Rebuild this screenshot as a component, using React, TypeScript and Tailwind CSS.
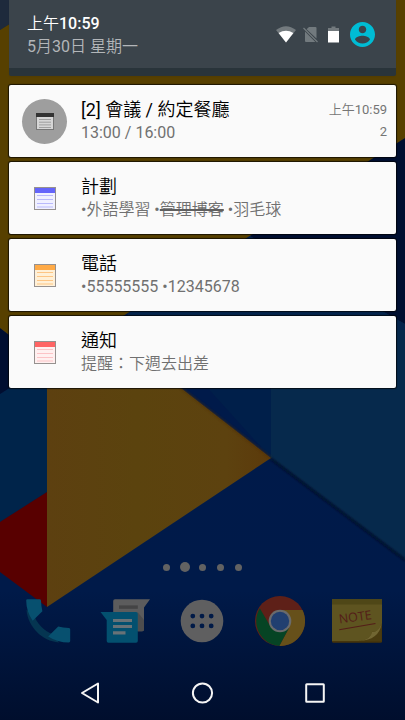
import type { ReactNode } from "react";
import clsx from "clsx";

type Notification = {
  title: string;
  body: ReactNode;
  icon: ReactNode;
  time?: string;
  count?: number;
};

type NoteColors = {
  bar: string;
  paper: string;
  line: string;
};

function NoteIcon({ bar, paper, line }: NoteColors) {
  return (
    <svg viewBox="0 0 22 23" className="h-[23px] w-[22px]" aria-hidden="true">
      <rect x="0.5" y="0.5" width="21" height="22" fill={paper} stroke="#96918f" />
      <rect x="1" y="1" width="20" height="5" fill={bar} />
      <path d="M3 8.5H19M3 12.5H19M3 16.5H19M3 20H19" stroke={line} strokeWidth="1.1" />
    </svg>
  );
}

function MeetingIcon() {
  return (
    <span className="flex size-[45px] items-center justify-center rounded-full bg-[#9e9e9e]">
      <svg viewBox="0 0 18 17" className="h-[17px] w-[18px]" aria-hidden="true">
        <rect x="0.5" y="0.5" width="17" height="16" fill="#d6d6d6" stroke="#777" />
        <rect width="18" height="4" fill="#333" />
        <path d="M3 6.5H15M3 9.2H15M3 11.9H15M3 14.5H15" stroke="#999" strokeWidth="0.9" />
      </svg>
    </span>
  );
}

const notifications: Notification[] = [
  {
    title: "[2] 會議 / 約定餐廳",
    body: "13:00 / 16:00",
    icon: <MeetingIcon />,
    time: "上午10:59",
    count: 2,
  },
  {
    title: "計劃",
    body: (
      <>
        •外語學習 •<s className="decoration-[#5f5f5f] decoration-2">管理博客</s> •羽毛球
      </>
    ),
    icon: <NoteIcon bar="#6464fa" paper="#f0f0ff" line="#b9b9fb" />,
  },
  {
    title: "電話",
    body: "•55555555 •12345678",
    icon: <NoteIcon bar="#ffaa46" paper="#fff0d7" line="#fdc584" />,
  },
  {
    title: "通知",
    body: "提醒：下週去出差",
    icon: <NoteIcon bar="#ff6464" paper="#fff0f0" line="#fcc3c6" />,
  },
];

function Wallpaper() {
  return (
    <svg
      viewBox="0 0 405 720"
      preserveAspectRatio="xMidYMid slice"
      className="absolute inset-0 h-full w-full"
      aria-hidden="true"
    >
      <defs>
        <linearGradient id="base" x1="0" y1="0" x2="0" y2="1">
          <stop offset="0" stopColor="#001a4c" />
          <stop offset="0.82" stopColor="#001a49" />
          <stop offset="1" stopColor="#000e2d" />
        </linearGradient>
        <linearGradient id="sheet" x1="0" y1="0" x2="1" y2="0">
          <stop offset="0" stopColor="#5d4010" />
          <stop offset="0.4" stopColor="#5b430e" />
          <stop offset="0.8" stopColor="#5d420f" />
          <stop offset="1" stopColor="#5c3a0b" />
        </linearGradient>
        <filter id="soft" x="-10%" y="-10%" width="120%" height="120%">
          <feGaussianBlur stdDeviation="1" />
        </filter>
      </defs>
      <rect width="405" height="720" fill="url(#base)" />
      <path d="M271 300H405V559L271 458Z" fill="#06294c" />
      <path d="M128 300H271V458Z" fill="#001f4a" />
      <path d="M271 459L405 560" stroke="#000d25" strokeWidth="2" filter="url(#soft)" />
      <path d="M405 138V324L250 236Z" fill="#000f31" />
      <path d="M250 236L405 324V330H128V313Z" fill="#04244c" />
      <path d="M0 394L47 364V492L0 522Z" fill="#00244a" />
      <path d="M0 328L47 364L0 394Z" fill="#000e30" />
      <path d="M0 0H48L0 30Z" fill="#1e2a3c" />
      <path d="M48 0H405V138L47 364L0 328V30Z" fill="#574000" />
      <path d="M0 522L47 492V607L0 572Z" fill="#580000" />
      <path d="M47 607V364H150L271 458Z" fill="url(#sheet)" />
      <path d="M181 388L271 458" stroke="#4c2f08" strokeWidth="2" opacity="0.6" filter="url(#soft)" />
    </svg>
  );
}

function StatusIcons() {
  return (
    <div className="flex items-center">
      <svg viewBox="0 0 20 17" className="mr-[7px] h-[17px] w-5" aria-hidden="true">
        <path d="M0 4Q10-3.6 20 4L10 16.5Z" fill="#737a7e" />
        <path d="M2.6 7.1Q10 2.4 17.4 7.1L10 16.5Z" fill="#fff" />
      </svg>
      <svg viewBox="0 0 15 17" className="mr-2.5 h-[17px] w-[15px]" aria-hidden="true">
        <path d="M6 1H12.5Q13.5 1 13.5 2V12.5L3.6 3.3ZM2 5.5L12.4 16H3Q2 16 2 15Z" fill="#727a7e" />
        <path d="M0.5 2L14.5 16" stroke="#727a7e" strokeWidth="1.3" />
      </svg>
      <svg viewBox="0 0 12 17" className="mr-2.5 h-[17px] w-3" aria-hidden="true">
        <path d="M0 2H3.5V0.5H7.5V2H11V6H0Z" fill="#737a7e" />
        <path d="M0 5H11V16.5H0Z" fill="#fff" />
      </svg>
      <button type="button" aria-label="使用者" className="block">
        <svg viewBox="2 2 20 20" className="size-[25px]" aria-hidden="true">
          <path
            d="M12 2C6.48 2 2 6.48 2 12s4.48 10 10 10 10-4.48 10-10S17.52 2 12 2zm0 3c1.66 0 3 1.34 3 3s-1.34 3-3 3-3-1.34-3-3 1.34-3 3-3zm0 14.2c-2.5 0-4.71-1.28-6-3.22.03-1.99 4-3.08 6-3.08 1.99 0 5.97 1.09 6 3.08-1.29 1.94-3.5 3.22-6 3.22z"
            fill="#00bcd4"
          />
        </svg>
      </button>
    </div>
  );
}

function StatusHeader() {
  return (
    <header className="rounded-b-xs border-b-8 border-[#29343a] bg-[#3b444b] shadow-xs">
      <div className="flex h-17 items-center justify-between pr-[21px] pl-[18px]">
        <div className="pt-0.5 text-base leading-[23px]">
          <p className="text-white">
            上午<span className="font-medium">10:59</span>
          </p>
          <p className="text-[#b3b6b9]">5月30日 星期一</p>
        </div>
        <StatusIcons />
      </div>
    </header>
  );
}

function NotificationCard({ title, body, icon, time, count }: Notification) {
  return (
    <li className="flex h-18 items-center gap-3.5 rounded-xs bg-[#fafafa] pr-[9px] pl-[13px] shadow-[0_0_1px_1px_rgba(0,0,0,0.7)]">
      <div className="flex w-[45px] shrink-0 justify-center">{icon}</div>
      <div className="min-w-0 flex-1">
        <h2 className="truncate text-lg leading-6 text-black">{title}</h2>
        <p className="truncate text-base leading-[22px] text-[#707070]">{body}</p>
      </div>
      {time && (
        <div className="text-right text-[13px] leading-[22px] text-[#757575]">
          <p>{time}</p>
          <p>{count}</p>
        </div>
      )}
    </li>
  );
}

function PhoneIcon() {
  return (
    <svg viewBox="0 0 50 50" className="size-[50px]" aria-hidden="true">
      <path d="M3.5 14C5 31 19 45 36 46.5L30 38C22 36 12 26 11 18Z" fill="#053551" />
      <path
        d="M4.5 3.3H16.5Q17.8 3.3 18 4.6Q18.2 10.5 19.4 15.3L9.7 24.8Q3.2 15.5 3.2 4.6Q3.2 3.3 4.5 3.3Z"
        fill="#07506f"
      />
      <path
        d="M25.2 40.4L35.2 30.6Q40 32 46 32.1Q47.2 32.3 47.2 33.5V45.1Q47.2 46.5 45.8 46.5Q34.5 46.5 25.2 40.4Z"
        fill="#07506f"
      />
    </svg>
  );
}

function MessagesIcon() {
  return (
    <svg viewBox="0 0 50 50" className="size-[50px]" aria-hidden="true">
      <path d="M15 3.2H50L44 11.5V33.5Q44 35.2 42.3 35.2H15Q13.2 35.2 13.2 33.5V5Q13.2 3.2 15 3.2Z" fill="#5c5c5d" />
      <path d="M37.5 16L44 24V33.5Q44 35.2 42.3 35.2H37.5Z" fill="#4d4d4e" />
      <rect x="19" y="9.4" width="18.8" height="3.4" fill="#444445" />
      <path d="M0.5 16H36Q37.8 16 37.8 17.8V44.9Q37.8 46.7 36 46.7H8.5Q6.7 46.7 6.7 44.9V24Z" fill="#03506f" />
      <path d="M13 23H32V26H13ZM13 29H32V32H13ZM13 35.2H25.5V38.5H13Z" fill="#687277" />
    </svg>
  );
}

function AppsIcon() {
  return (
    <svg viewBox="0 0 50 50" className="size-[50px]" aria-hidden="true">
      <circle cx="25" cy="25" r="21.3" fill="#5f5f60" />
      {[15.8, 25, 34.2].map((x) => (
        <g key={x} fill="#001a47">
          <circle cx={x} cy="20.1" r="2.4" />
          <circle cx={x} cy="29.9" r="2.4" />
        </g>
      ))}
    </svg>
  );
}

function ChromeIcon() {
  return (
    <svg viewBox="0 0 50 50" className="size-[50px]" aria-hidden="true">
      <circle cx="25" cy="25" r="25" fill="#5e2018" />
      <path d="M25 14H47.5A25 25 0 0 1 24.3 50L34.5 31Z" fill="#66501a" />
      <path d="M4.8 12.2L15.4 30.4Q21 37 34 32L24.3 50A25 25 0 0 1 4.8 12.2Z" fill="#064424" />
      <circle cx="25" cy="25" r="11.3" fill="#6a6b6c" />
      <circle cx="25" cy="25" r="9.2" fill="#213f70" />
    </svg>
  );
}

function NotesAppIcon() {
  return (
    <svg viewBox="0 0 50 50" className="size-[50px]" aria-hidden="true">
      <rect y="4" width="50" height="42.7" rx="1.5" fill="#46350b" />
      <path d="M0 3.2H50V28Q48 45 26 45H0Z" fill="#5e5420" />
      <path d="M0 3.2H50V8.5H0Z" fill="#4f4717" />
      <path d="M27 45Q39 43.5 40 36Q48 35.5 49.5 27V45Z" fill="#4a3c10" />
      <path d="M27 45Q39 43.5 40 36Q46 36.5 49.5 28Q47 44 27 45Z" fill="#716632" />
      <text
        x="7.5"
        y="27.5"
        transform="rotate(-8 8 27.5)"
        fontSize="12.5"
        fontWeight="500"
        fill="#541d18"
        fontFamily="'Open Sans', sans-serif"
      >
        NOTE
      </text>
      <path d="M7.2 33.8L43.5 27.5" stroke="#541d18" strokeWidth="1.1" />
    </svg>
  );
}

const dockApps = [
  { label: "電話", icon: <PhoneIcon /> },
  { label: "訊息", icon: <MessagesIcon /> },
  { label: "應用程式", icon: <AppsIcon /> },
  { label: "Chrome", icon: <ChromeIcon /> },
  { label: "記事", icon: <NotesAppIcon /> },
];

const navButtons = [
  { label: "返回", shape: <path d="M4 12L20 2.5V21.5Z" strokeLinejoin="round" /> },
  { label: "主畫面", shape: <circle cx="12.5" cy="12" r="9.6" /> },
  { label: "最近", shape: <rect x="3.2" y="3.2" width="17.6" height="17.6" rx="0.5" /> },
];

function PageDots({ active }: { active: number }) {
  return (
    <div className="flex h-2.5 items-center justify-center">
      {[0, 1, 2, 3, 4].map((page) => (
        <span key={page} className="flex w-[18px] justify-center">
          <span
            className={clsx(
              "rounded-full bg-[#626262]",
              page === active ? "size-2.5" : "size-[7px]",
            )}
          />
        </span>
      ))}
    </div>
  );
}

export default function App() {
  return (
    <div className="relative flex min-h-screen flex-col overflow-hidden bg-[#001a4c] font-[Roboto,'Noto_Sans_CJK_TC_DemiLight','Noto_Sans_CJK_TC',sans-serif]">
      <Wallpaper />
      <main className="relative flex flex-1 flex-col">
        <section className="px-[9px]">
          <StatusHeader />
          <ul className="mt-[9px] flex flex-col gap-[5px]">
            {notifications.map((item) => (
              <NotificationCard key={item.title} {...item} />
            ))}
          </ul>
        </section>
        <div className="mt-auto">
          <PageDots active={1} />
          <div className="mt-6 grid grid-cols-5 px-[9px]">
            {dockApps.map((app) => (
              <button key={app.label} type="button" aria-label={app.label} className="flex justify-center">
                {app.icon}
              </button>
            ))}
          </div>
        </div>
      </main>
      <nav className="relative mt-5 grid h-[54px] grid-cols-3 px-[34px]">
        {navButtons.map((button) => (
          <button
            key={button.label}
            type="button"
            aria-label={button.label}
            className="flex items-center justify-center"
          >
            <svg viewBox="0 0 24 24" className="size-6" fill="none" stroke="#f5f5f5" strokeWidth="2" aria-hidden="true">
              {button.shape}
            </svg>
          </button>
        ))}
      </nav>
    </div>
  );
}
